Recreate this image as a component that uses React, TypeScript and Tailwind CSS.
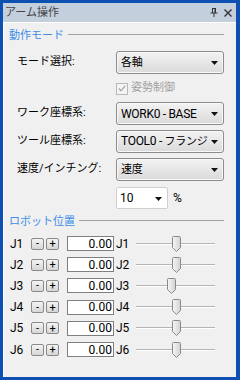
import React from "react";

const font = "font-[family-name:Roboto,'Noto_Sans_CJK_JP',sans-serif]";

// Dropdown arrow
const Arrow = () => (
  <svg width="7" height="4" viewBox="0 0 7 4" className="absolute right-[5px] top-[9px]">
    <polygon points="0,0 7,0 3.5,4" fill="#111" />
  </svg>
);

// Read-only combo (gray gradient)
const Combo = ({ children }: { children: React.ReactNode }) => (
  <div className="relative flex h-[23px] w-[108px] items-center rounded-[3px] border border-[#8c8c8c] bg-gradient-to-b from-[#f3f3f3] to-[#dadada] pl-[4px] text-[12px] tracking-[-0.3px] text-black shadow-[inset_0_0_0_1px_#f8f8f8]">
    <span className="whitespace-nowrap">{children}</span>
    <Arrow />
  </div>
);

// Group heading with etched line
const Heading = ({ label }: { label: string }) => (
  <div className="flex h-[14px] items-center gap-[4px]">
    <span className="text-[11px] leading-none text-[#3d8ee8]">{label}</span>
    <div className="h-[2px] flex-1 border-t border-[#a3a3a3] border-b-white" />
  </div>
);

const Label = ({ text }: { text: string }) => (
  <span className="w-[107px] pl-[8px] text-[11px] text-black">{text}</span>
);

const SmallBtn = ({ t }: { t: string }) => (
  <div className="flex h-[12px] w-[13px] items-center justify-center rounded-[2px] border border-[#8a8a8a] bg-gradient-to-b from-[#f4f4f4] to-[#d6d6d6] text-[11px] leading-none text-black">
    {t}
  </div>
);

const Slider = ({ pos }: { pos: number }) => (
  <div className="relative ml-[8px] h-[16px] w-[79px] shrink-0">
    <div className="absolute left-0 right-0 top-[7px] h-[2px] border-t border-[#b4b4b4] bg-white" />
    <div className="absolute top-0" style={{ left: `${pos}px` }}>
      <svg width="9" height="16" viewBox="0 0 9 16" className="block">
        <defs>
          <linearGradient id="th" x1="0" x2="1" y1="0" y2="0">
            <stop offset="0" stopColor="#f7f7f7" />
            <stop offset="1" stopColor="#d2d2d2" />
          </linearGradient>
        </defs>
        <path d="M1.5 0.5 H7.5 Q8.5 0.5 8.5 1.5 V11.5 L4.5 15.5 L0.5 11.5 V1.5 Q0.5 0.5 1.5 0.5 Z" fill="url(#th)" stroke="#8a8a8a" />
      </svg>
    </div>
  </div>
);

const joints = [
  { n: "J1", pos: 36 },
  { n: "J2", pos: 36 },
  { n: "J3", pos: 31 },
  { n: "J4", pos: 36 },
  { n: "J5", pos: 36 },
  { n: "J6", pos: 36 },
];

export default function App() {
  return (
    <div className={`h-[380px] w-[240px] bg-[#0e4fb2] pb-[3px] pl-[3px] pr-[4px] pt-[3px] ${font}`}>
      <div className="flex h-full flex-col">
        {/* title bar */}
        <div className="flex h-[19px] items-center justify-between bg-[#c3cfdc] pl-[2px] pr-[4px]">
          <span className="text-[11px] leading-none text-[#444]">アーム操作</span>
          <div className="flex items-center gap-[6px]">
            <svg width="8" height="9" viewBox="0 0 8 9">
              <path d="M2 0.5 H6 M2.5 0.5 V5 M5.5 0.5 V5 M0.5 5 H7.5 M4 5 V9" stroke="#333" strokeWidth="1" fill="none" />
              <rect x="4.5" y="1" width="1" height="4" fill="#333" />
            </svg>
            <svg width="8" height="8" viewBox="0 0 8 8">
              <path d="M0.5 0.5 L7.5 7.5 M7.5 0.5 L0.5 7.5" stroke="#333" strokeWidth="1.4" />
            </svg>
          </div>
        </div>

        {/* body */}
        <div className="flex flex-1 flex-col border-l border-t border-white bg-[#f0f0f0] pl-[5px] pr-[12px] pt-[5px]">
          <Heading label="動作モード" />

          <div className="mt-[9px] flex items-center">
            <Label text="モード選択:" />
            <Combo>
              <span className="text-[11px]">各軸</span>
            </Combo>
          </div>

          <div className="mt-[7px] flex h-[15px] items-center pl-[107px]">
            <div className="flex h-[12px] w-[12px] items-center justify-center border border-[#b8b8b8] bg-[#f4f4f4]">
              <svg width="8" height="7" viewBox="0 0 8 7">
                <path d="M0.8 3.5 L3 5.8 L7.2 0.8" stroke="#a8a8a8" strokeWidth="1.3" fill="none" />
              </svg>
            </div>
            <span className="ml-[3px] text-[11px] text-[#a0a0a0]">姿勢制御</span>
          </div>

          <div className="mt-[6px] flex items-center">
            <Label text="ワーク座標系:" />
            <Combo>WORK0 - BASE</Combo>
          </div>

          <div className="mt-[5px] flex items-center">
            <Label text="ツール座標系:" />
            <Combo>
              TOOL0 - <span className="text-[11px]">フランジ</span>
            </Combo>
          </div>

          <div className="mt-[5px] flex items-center">
            <Label text="速度/インチング:" />
            <Combo>
              <span className="text-[11px]">速度</span>
            </Combo>
          </div>

          <div className="mt-[6px] flex items-center pl-[107px]">
            <div className="relative flex h-[22px] w-[52px] items-center rounded-[2px] border border-[#cfcfcf] bg-white pl-[3px] text-[12px]">
              <span>10</span>
              <Arrow />
            </div>
            <span className="ml-[5px] text-[12px]">%</span>
          </div>

          <div className="mt-[5px]">
            <Heading label="ロボット位置" />
          </div>

          <div className="mt-[5px] flex flex-col">
            {joints.map((j) => (
              <div key={j.n} className="flex h-[21.2px] items-center leading-none">
                <span className="w-[22px] pl-[1px] text-[12px]">{j.n}</span>
                <div className="flex gap-[2px]">
                  <SmallBtn t="-" />
                  <SmallBtn t="+" />
                </div>
                <div className="ml-[8px] flex h-[15px] w-[47px] items-center justify-end border border-[#7f7f7f] bg-white pr-[1px] text-[12px]">
                  0.00
                </div>
                <span className="ml-[2px] w-[12px] text-[12px]">{j.n}</span>
                <Slider pos={j.pos} />
              </div>
            ))}
          </div>
        </div>
      </div>
    </div>
  );
}
